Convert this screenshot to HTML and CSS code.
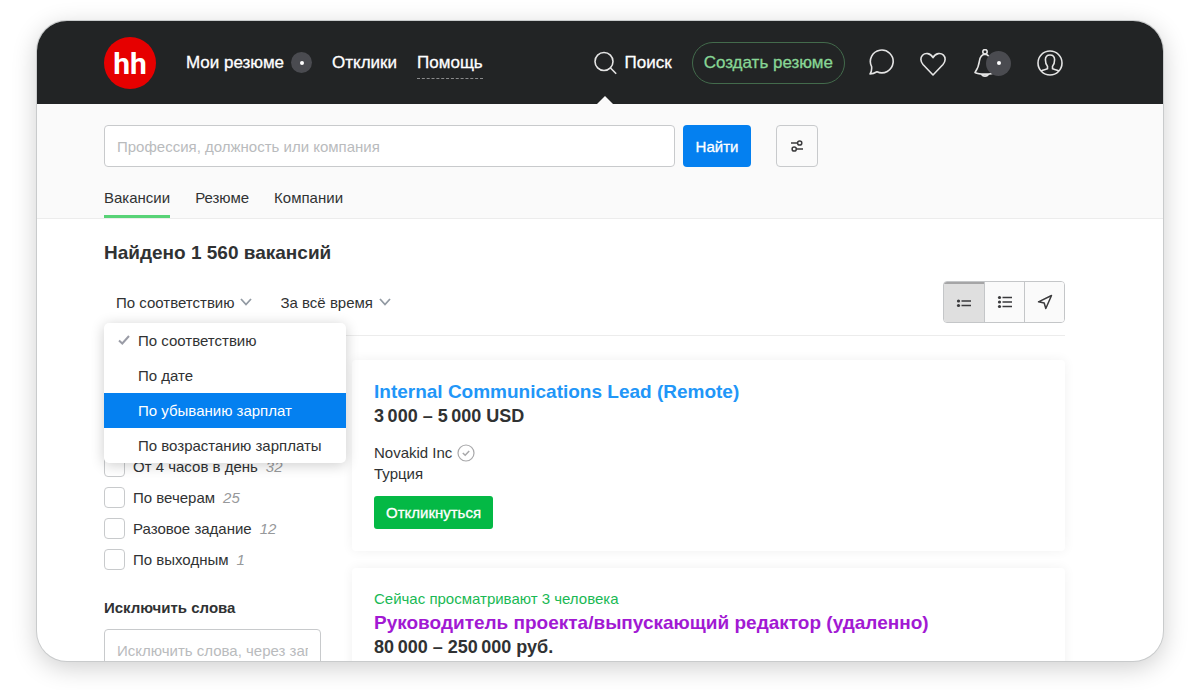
FILE: index.html
```html
<!DOCTYPE html>
<html lang="ru">
<head>
<meta charset="utf-8">
<meta name="viewport" content="width=device-width, initial-scale=1">
<title>Найдено 1 560 вакансий</title>
<link rel="stylesheet" href="styles.css">
</head>
<body>
<div class="window">
  <header class="header">
    <a class="logo" href="#" aria-label="hh">hh</a>
    <nav class="nav">
      <a class="nav-link" href="#">Мои резюме <span class="dot"></span></a>
      <a class="nav-link" href="#">Отклики</a>
      <a class="nav-link nav-help" href="#">Помощь</a>
    </nav>
    <div class="actions">
      <a class="nav-link nav-search" href="#">
        <svg width="24" height="24" viewBox="0 0 24 24" fill="none" stroke="#e4e4e4" stroke-width="1.6"><circle cx="10" cy="10.500" r="9"/><path d="M16.500 17l5.700 5.700"/></svg>
        Поиск
      </a>
      <a class="create" href="#">Создать резюме</a>
      <a class="icon-link" href="#" aria-label="Сообщения">
        <svg width="28" height="28" viewBox="0 0 28 28" fill="none" stroke="#e4e4e4" stroke-width="1.6" stroke-linejoin="round"><path d="M2 25C3.200 23.500 3.900 21 3.600 17.600A11.400 11.400 0 1 1 9 22.800C7 24 4.600 25 2 25z"/></svg>
      </a>
      <a class="icon-link" href="#" aria-label="Избранное">
        <svg width="28" height="28" viewBox="0 0 28 28" fill="none" stroke="#e4e4e4" stroke-width="1.6" stroke-linejoin="round"><path d="M14 26L4 15.500C1.300 12.500 1.200 8.500 3.500 6.200C6.200 3.600 11.500 3.800 14 8.700C16.500 3.800 21.800 3.600 24.500 6.200C26.800 8.500 26.700 12.500 24 15.500z"/></svg>
      </a>
      <a class="icon-link bell" href="#" aria-label="Уведомления">
        <svg width="28" height="28" viewBox="0 0 28 28" fill="none" stroke="#e4e4e4" stroke-width="1.6" stroke-linejoin="round"><circle cx="12" cy="2.800" r="2.200"/><path d="M12 5.200C8.600 5.400 7 8 6.400 12C5.700 17.500 5 19.500 2 23.500C6 25.700 18 25.700 22 23.500C19 19.500 18.300 17.500 17.600 12C17 8 15.400 5.400 12 5.200zM8.800 25C9.300 27.800 14.700 27.800 15.200 25"/></svg>
        <span class="dot dot-big"></span>
      </a>
      <a class="icon-link" href="#" aria-label="Профиль">
        <svg width="28" height="28" viewBox="0 0 28 28" fill="none" stroke="#e4e4e4" stroke-width="1.6" stroke-linejoin="round"><circle cx="14" cy="14" r="12"/><path d="M5 22C7 20.800 9.500 20.500 11.500 19.800V17.200C9.800 15.500 9.400 13 9.400 10.800C9.400 7.500 11.200 6 14 6S18.600 7.500 18.600 10.800C18.600 13 18.200 15.500 16.500 17.200V19.800C18.500 20.500 21 20.800 23 22"/></svg>
      </a>
    </div>
  </header>

  <section class="search">
    <form class="search-form">
      <input class="field" type="text" aria-label="Поиск" placeholder="Профессия, должность или компания">
      <button class="find" type="submit">Найти</button>
      <button class="filter" type="button" aria-label="Фильтры">
        <svg width="12" height="12" viewBox="0 0 12 12" fill="none" stroke="#3b3b3d" stroke-width="1.5"><path d="M0 3h6.500M5.500 9H12"/><circle cx="8.700" cy="3" r="2.100"/><circle cx="3.200" cy="9" r="2.100"/></svg>
      </button>
    </form>
    <nav class="tabs">
      <a class="tab tab-active" href="#">Вакансии</a>
      <a class="tab" href="#">Резюме</a>
      <a class="tab" href="#">Компании</a>
    </nav>
  </section>

  <main class="main">
    <h1 class="title">Найдено 1 560 вакансий</h1>
    <div class="toolbar">
      <div class="sort">
        <button class="drop" type="button" aria-haspopup="menu" aria-expanded="true">По соответствию
          <svg width="12" height="8" viewBox="0 0 12 8" fill="none" stroke="#929aa3" stroke-width="1.800"><path d="M1 1l5 5.500l5-5.500"/></svg>
        </button>
        <ul class="menu" role="menu">
          <li><button class="item" type="button" role="menuitem"><svg class="tick" width="12" height="10" viewBox="0 0 12 10" fill="none" stroke="#9a9ca6" stroke-width="2"><path d="M1 5.500L4.300 8.500L11 1"/></svg>По соответствию</button></li>
          <li><button class="item" type="button" role="menuitem"><span class="tick"></span>По дате</button></li>
          <li><button class="item item-active" type="button" role="menuitem"><span class="tick"></span>По убыванию зарплат</button></li>
          <li><button class="item" type="button" role="menuitem"><span class="tick"></span>По возрастанию зарплаты</button></li>
        </ul>
      </div>
      <div class="drop">
        <select class="period" aria-label="Период"><option>За всё время</option></select>
        <svg width="12" height="8" viewBox="0 0 12 8" fill="none" stroke="#929aa3" stroke-width="1.800"><path d="M1 1l5 5.500l5-5.500"/></svg>
      </div>
      <div class="views">
        <button class="view view-active" type="button" aria-label="Кратко"><svg width="16" height="14" viewBox="0 0 16 14" fill="#3a3a3c"><circle cx="2.500" cy="6" r="1.600"/><circle cx="2.500" cy="10.500" r="1.600"/><path d="M5.500 5.200H15v1.600H5.500zM5.500 9.700H15v1.600H5.500z"/></svg></button>
        <button class="view" type="button" aria-label="Подробно"><svg width="16" height="14" viewBox="0 0 16 14" fill="#3a3a3c"><circle cx="2.500" cy="2.500" r="1.600"/><circle cx="2.500" cy="7" r="1.600"/><circle cx="2.500" cy="11.500" r="1.600"/><path d="M5.500 1.700H15v1.600H5.500zM5.500 6.200H15v1.600H5.500zM5.500 10.700H15v1.600H5.500z"/></svg></button>
        <button class="view" type="button" aria-label="На карте"><svg width="16" height="16" viewBox="0 0 16 16" fill="none" stroke="#3a3a3c" stroke-width="1.500" stroke-linejoin="round"><path d="M14.500 1.500L8.800 14.500L7.200 9L1.500 7.800z"/></svg></button>
      </div>
    </div>

    <div class="columns">
      <aside class="sidebar">
        <div class="checks">
          <label class="check"><input type="checkbox">От 4 часов в день <i>32</i></label>
          <label class="check"><input type="checkbox">По вечерам <i>25</i></label>
          <label class="check"><input type="checkbox">Разовое задание <i>12</i></label>
          <label class="check"><input type="checkbox">По выходным <i>1</i></label>
        </div>
        <label class="exclude-label" for="exclude">Исключить слова</label>
        <input class="field" id="exclude" type="text" placeholder="Исключить слова, через запятую">
      </aside>
      <div class="results">
        <article class="card">
          <h2 class="job"><a href="#">Internal Communications Lead (Remote)</a></h2>
          <p class="pay">3&#8201;000 – 5&#8201;000 USD</p>
          <p class="company">Novakid Inc
            <svg width="18" height="18" viewBox="0 0 18 18" fill="none" stroke="#a8a8aa" stroke-width="1.200"><circle cx="9" cy="9" r="8"/><path d="M5.800 9l2.400 2.300l4-4.300" stroke-width="1.500"/></svg>
          </p>
          <p class="place">Турция</p>
          <button class="respond" type="button">Откликнуться</button>
        </article>
        <article class="card">
          <p class="watching">Сейчас просматривают 3 человека</p>
          <h2 class="job job-visited"><a href="#">Руководитель проекта/выпускающий редактор (удаленно)</a></h2>
          <p class="pay">80&#8201;000 – 250&#8201;000 руб.</p>
        </article>
      </div>
    </div>
  </main>
</div>
</body>
</html>
```
FILE: styles.css
```css
* { box-sizing: border-box; }

body {
  margin: 0;
  height: 100vh;
  padding: 21px 37px 29px;
  background: #fff;
  color: #303233;
  font: 15px/21px "Liberation Sans", Arial, sans-serif;
  overflow: hidden;
}

button, input, select { font: inherit; color: inherit; }
button { cursor: pointer; }
a { color: inherit; text-decoration: none; }
h1, h2, p, ul { margin: 0; padding: 0; }
ul { list-style: none; }
svg { display: block; flex: none; }

.window {
  height: 100%;
  overflow: hidden;
  border-radius: 30px;
  background: #fff;
  box-shadow: 0 0 0 1px #c9cbcc, 0 6px 26px rgba(0, 0, 0, 0.2);
}

.header {
  display: flex;
  align-items: center;
  height: 83px;
  padding: 0 98px 0 67px;
  background: #222425;
  color: #fff;
  font-size: 17px;
}

.logo {
  width: 52px;
  height: 52px;
  margin-right: 30px;
  border-radius: 50%;
  background: #e60000;
  font: bold 30px/54px Roboto, Arial, sans-serif;
  text-align: center;
}

.nav, .actions { display: flex; align-items: center; }
.nav { gap: 20px; }
.actions { margin-left: auto; }

.nav-link {
  display: flex;
  align-items: center;
  gap: 7px;
  height: 32px;
  -webkit-text-stroke: 0.3px currentColor;
}

.nav-help { border-bottom: 1px dashed #8a8b8c; border-top: 1px solid transparent; }

.dot {
  display: grid;
  place-items: center;
  width: 21px;
  height: 21px;
  border-radius: 50%;
  background: #4a4b50;
}
.dot::after { content: ""; width: 4px; height: 4px; border-radius: 50%; background: #fff; }

.nav-search { position: relative; height: 83px; margin-right: 20px; }
.nav-search::after {
  content: "";
  position: absolute;
  left: 3px;
  bottom: 0;
  border: 8px solid transparent;
  border-top: 0;
  border-bottom-color: #fafafa;
}

.create {
  height: 42px;
  margin-right: 23px;
  padding: 0 11px;
  border: 1px solid #436b4c;
  border-radius: 21px;
  color: #88d695;
  line-height: 40px;
  -webkit-text-stroke: 0.3px currentColor;
}

.icon-link { position: relative; width: 28px; margin-right: 23px; }
.icon-link:last-child { margin-right: 1px; }
.bell { margin-left: 3px; margin-right: 35px; }
.dot-big { position: absolute; left: 13px; top: 2px; width: 25px; height: 25px; }

.search {
  padding: 21px 98px 0 67px;
  border-bottom: 1px solid #ececec;
  background: #fafafa;
}

.search-form { display: flex; padding-right: 247px; }

.field {
  width: 100%;
  height: 42px;
  padding: 0 12px;
  border: 1px solid #c8cacc;
  border-radius: 4px;
  background: #fff;
}
.field::placeholder { color: #b9bbbd; opacity: 1; }
.search-form .field { flex: 1; min-width: 0; }

.find, .filter { height: 42px; border-radius: 4px; }
.find {
  width: 68px;
  margin: 0 25px 0 8px;
  padding: 0;
  border: 0;
  background: #0480f0;
  color: #fff;
  -webkit-text-stroke: 0.3px currentColor;
}
.filter {
  display: grid;
  place-items: center;
  width: 42px;
  padding: 0;
  border: 1px solid #c8cacc;
  background: #fafafa;
}

.tabs { display: flex; gap: 25px; padding-top: 20px; }
.tab { padding-bottom: 7px; border-bottom: 3px solid transparent; }
.tab-active { border-color: #58d377; }

.main { padding: 22px 98px 0 67px; }
.title { font-size: 19px; line-height: 24px; }

.toolbar {
  display: flex;
  align-items: center;
  margin-top: 16px;
  padding-bottom: 12px;
  border-bottom: 1px solid #ececec;
}

.sort { position: relative; }
.drop {
  display: flex;
  align-items: center;
  gap: 5px;
  height: 41px;
  margin-right: 17px;
  padding: 0 0 0 12px;
  border: 0;
  background: none;
}
.period { padding: 0; border: 0; background: none; appearance: none; }

.menu {
  position: absolute;
  top: 41px;
  left: 0;
  z-index: 2;
  width: 242px;
  border-radius: 5px;
  background: #fff;
  box-shadow: 0 2px 14px rgba(0, 0, 0, 0.2);
}
.item {
  display: flex;
  align-items: center;
  gap: 8px;
  width: 100%;
  height: 35px;
  padding: 0 14px;
  border: 0;
  background: none;
  white-space: nowrap;
}
.item-active { background: #0480f0; color: #fff; }
.tick { width: 12px; }

.views { display: flex; margin-left: auto; border: 1px solid #c4c6c8; border-radius: 4px; overflow: hidden; }
.view {
  display: grid;
  place-items: center;
  width: 40px;
  height: 40px;
  padding: 0;
  border: 0;
  background: #fafafa;
}
.view + .view { border-left: 1px solid #c4c6c8; }
.view-active { background: #dfdfdf; box-shadow: inset 0 2px 0 #a5a5a6; }

.columns { display: grid; grid-template-columns: 217px 1fr; gap: 31px; }

.sidebar { padding-top: 120px; }
.checks { display: grid; gap: 10px; }
.check { display: flex; align-items: center; gap: 8px; }
.check input {
  width: 21px;
  height: 21px;
  margin: 0;
  border: 1px solid #c8cacc;
  border-radius: 4px;
  background: #fff;
  appearance: none;
}
.check i { color: #97999b; }
.exclude-label { display: block; margin: 27px 0 11px; font-weight: bold; }

.results { display: grid; gap: 17px; padding-top: 24px; }
.card {
  padding: 20px 22px 22px;
  border-radius: 4px;
  background: #fff;
  box-shadow: 0 0 12px rgba(0, 0, 0, 0.06);
}
.job { font-size: 19px; line-height: 24px; color: #2196f8; }
.job-visited { color: #a219d3; }
.pay { font-size: 18px; line-height: 24px; font-weight: bold; }
.company { display: flex; align-items: center; gap: 5px; margin-top: 14px; }
.respond {
  height: 33px;
  margin-top: 12px;
  padding: 0 12px;
  border: 0;
  border-radius: 3px;
  background: #04b945;
  color: #fff;
  -webkit-text-stroke: 0.3px currentColor;
}
.watching { margin-bottom: 2px; color: #19b954; }
```
